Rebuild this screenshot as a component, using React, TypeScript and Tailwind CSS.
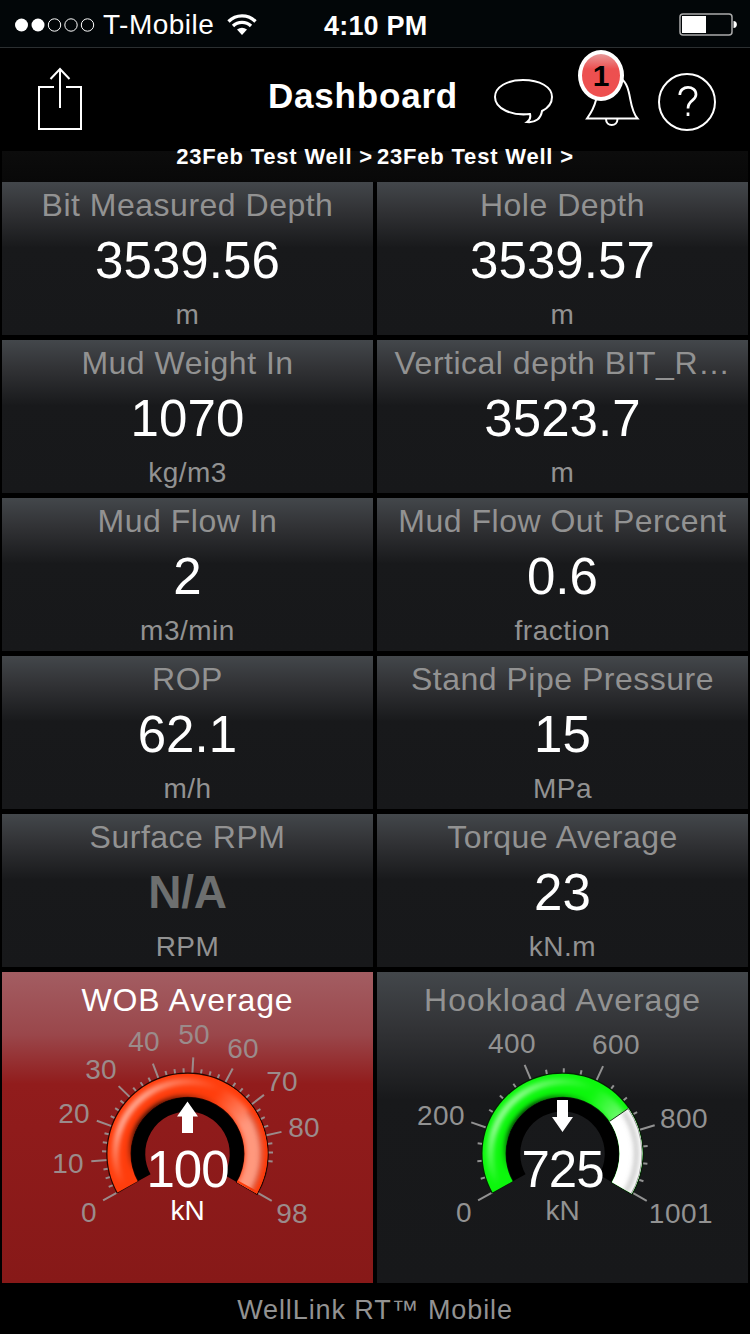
import React from "react";

const readings = [
  { label: "Bit Measured Depth", value: "3539.56", unit: "m" },
  { label: "Hole Depth", value: "3539.57", unit: "m" },
  { label: "Mud Weight In", value: "1070", unit: "kg/m3" },
  { label: "Vertical depth BIT_R…", value: "3523.7", unit: "m" },
  { label: "Mud Flow In", value: "2", unit: "m3/min" },
  { label: "Mud Flow Out Percent", value: "0.6", unit: "fraction" },
  { label: "ROP", value: "62.1", unit: "m/h" },
  { label: "Stand Pipe Pressure", value: "15", unit: "MPa" },
  { label: "Surface RPM", value: "N/A", unit: "RPM" },
  { label: "Torque Average", value: "23", unit: "kN.m" },
];

const CX = 185.5;
const CY = 181.7;
const START = 209;
const END = -30;

function polar(r: number, deg: number): [number, number] {
  const a = (deg * Math.PI) / 180;
  return [CX + r * Math.cos(a), CY - r * Math.sin(a)];
}

function arc(r: number, from: number, to: number) {
  const [x1, y1] = polar(r, from);
  const [x2, y2] = polar(r, to);
  const large = from - to > 180 ? 1 : 0;
  return `M${x1.toFixed(2)} ${y1.toFixed(2)}A${r} ${r} 0 ${large} 1 ${x2.toFixed(2)} ${y2.toFixed(2)}`;
}

const clamp = (v: number) => Math.max(0, Math.min(1, v));

// Strength of the left-hand gloss: strongest around 150 degrees, gone at the foot and past the top.
const gloss = (a: number) => clamp(Math.min((207 - a) / 45, (a - 65) / 65));
// Strength of the broad sheen that covers the right-hand side.
const sheen = (a: number) => clamp((66 - a) / 38);

const segments = Array.from({ length: 80 }, (_, i) => START + 4 - i * 3.1);

type Mark = { text: string; x: number; y: number };

type GaugeProps = {
  id: string;
  label: string;
  value: string;
  unit: string;
  alarm?: boolean;
  up?: boolean;
  scale: number;
  step: number;
  minor: number;
  lastMinor: number;
  fillTo: number;
  color: string;
  marks: Mark[];
};

function Gauge({ id, label, value, unit, alarm, up, scale, step, minor, lastMinor, fillTo, color, marks }: GaugeProps) {
  const per = 240 / scale;
  const majors: number[] = [];
  const minors: number[] = [];
  for (let v = 0; v <= lastMinor; v += minor) {
    (v % step === 0 ? majors : minors).push(START - v * per);
  }
  majors.push(-29.2);
  const soft = `url(#${id}-soft)`;
  return (
    <div
      className={
        alarm
          ? "relative h-[311px] bg-[linear-gradient(180deg,#a35d62_0%,#9a474b_20%,#911c1c_36%,#8f1b1b_50%,#871918_100%)]"
          : "relative h-[311px] bg-[linear-gradient(180deg,#43474b_0%,#323336_18%,#18191b_41%,#17181a_100%)]"
      }
    >
      <svg className="absolute inset-0 h-full w-full" viewBox="0 0 371 311" aria-hidden="true">
        <defs>
          <clipPath id={`${id}-band`}>
            <path d={`${arc(80, START, END)}L${polar(57, END).join(" ")}A57 57 0 1 0 ${polar(57, START).join(" ")}Z`} />
          </clipPath>
          <filter id={`${id}-soft`} filterUnits="userSpaceOnUse" x="0" y="0" width="371" height="311">
            <feGaussianBlur stdDeviation="2.4" />
          </filter>
        </defs>
        <g stroke={alarm ? "#9b8b8b" : "#929292"} strokeWidth="2">
          {majors.map((a) => {
            const [x1, y1] = polar(80, a);
            const [x2, y2] = polar(96.5, a);
            return <line key={a} x1={x1} y1={y1} x2={x2} y2={y2} />;
          })}
          {minors.map((a) => {
            const [x1, y1] = polar(80, a);
            const [x2, y2] = polar(85.5, a);
            return <line key={a} x1={x1} y1={y1} x2={x2} y2={y2} />;
          })}
        </g>
        <path d={arc(50, START, END)} fill="none" stroke="#000" strokeWidth="15.5" />
        <path d={arc(68.7, START + 0.5, END - 0.7)} fill="none" stroke={alarm ? "#260500" : "#062006"} strokeWidth="25" />
        <g clipPath={`url(#${id}-band)`}>
          <path d={arc(68.5, START + 1, END - 1)} fill="none" stroke={color} strokeWidth="25" />
          <g fill="none" filter={soft}>
            {segments.map((a) => (
              <path key={a} d={arc(55.5, a, a - 3.1)} stroke="#000" strokeOpacity={gloss(a + 6) * 0.9} strokeWidth="6" />
            ))}
          </g>
          <g fill="none" filter={soft}>
            {segments.map((a) => (
              <path key={a} d={arc(72, a, a - 3.1)} stroke="#fff" strokeOpacity={gloss(a) * 0.62} strokeWidth="6" />
            ))}
            {segments.map((a) => (
              <path key={`s${a}`} d={arc(66, a, a - 3.1)} stroke="#fff" strokeOpacity={sheen(a) * 0.48} strokeWidth="17" />
            ))}
          </g>
          {alarm ? (
            <>
              <path d={arc(79.500, 60, END)} fill="none" stroke="#ff3d0c" strokeWidth="2" />
              <path d={`M${polar(56, END + 0.6).join(" ")}L${polar(81, END + 0.6).join(" ")}`} stroke="#ff3d0c" strokeWidth="3" />
              <path d={arc(74, 35, END)} fill="none" stroke="#6b2010" strokeOpacity="0.35" strokeWidth="2.500" filter={soft} />
            </>
          ) : (
            <>
              <path d={arc(68.500, fillTo, END - 2)} fill="none" stroke="#fff" strokeWidth="24" />
              <path d={arc(74, fillTo, END - 2)} fill="none" stroke="#888" strokeOpacity="0.6" strokeWidth="3.500" filter={soft} />
              <path d={arc(79.500, fillTo, END - 2)} fill="none" stroke="#999" strokeWidth="1" />
              <path d={`M${polar(57, fillTo).join(" ")}L${polar(80, fillTo).join(" ")}`} stroke="#183818" strokeWidth="1" />
            </>
          )}
        </g>
        {up ? (
          <path d="M185.500 129.500L196 144.500H191V161H180V144.500H175Z" fill="#fff" />
        ) : (
          <path d="M185.500 160L175 145H180V128H191V145H196Z" fill="#fff" />
        )}
      </svg>
      {marks.map((m) => (
        <span
          key={m.text}
          className={
            alarm
              ? "absolute -translate-x-1/2 -translate-y-1/2 text-[28px] leading-[28px] tracking-[0.3px] text-[#9b8b8b]"
              : "absolute -translate-x-1/2 -translate-y-1/2 text-[28px] leading-[28px] tracking-[0.5px] text-[#929292]"
          }
          style={{ left: m.x, top: m.y }}
        >
          {m.text}
        </span>
      ))}
      <div className="relative flex flex-col items-center pt-[10px]">
        <h2 className={alarm ? "text-[32px] leading-[36px] tracking-[0.9px] text-white" : "text-[32px] leading-[36px] tracking-[1px] text-[#929292]"}>
          {label}
        </h2>
        <p className="mt-[123px] text-[51px] leading-[58px] tracking-[-1px] text-white">{value}</p>
        <p className={alarm ? "-mt-[2px] text-[28px] leading-[28px] text-white" : "-mt-[2px] text-[28px] leading-[28px] text-[#929292]"}>{unit}</p>
      </div>
    </div>
  );
}

export default function App() {
  return (
    <main className="flex h-[1334px] w-[750px] flex-col overflow-hidden bg-black font-['Liberation_Sans',Arial,sans-serif] text-white">
      <header>
        <div className="flex h-12 items-center border-b border-[#2b2f31] bg-[#020608] pt-[3px]">
          <div className="flex w-[324px] items-center pl-[15px]">
            <svg className="h-4 w-20" viewBox="0 0 80 16" aria-hidden="true">
              <circle cx="6.500" cy="8" r="6.500" fill="#fff" />
              <circle cx="23" cy="8" r="6.500" fill="#fff" />
              <g fill="none" stroke="#fff" strokeWidth="1">
                <circle cx="39.500" cy="8" r="6.200" />
                <circle cx="56" cy="8" r="6.200" />
                <circle cx="72.500" cy="8" r="6.200" />
              </g>
            </svg>
            <span className="ml-2 w-[112px] whitespace-nowrap text-[28px] leading-8 tracking-[0.5px]">T-Mobile</span>
            <svg className="ml-3 h-[22px] w-[30px]" viewBox="0 0 30 22" aria-hidden="true">
              <g fill="none" stroke="#fff" strokeWidth="3.300">
                <path d="M1.500 7.500C9 0 21 0 28.500 7.500" />
                <path d="M6 12C11 7.200 19 7.200 24 12" />
              </g>
              <path d="M10 15.500Q15 12 20 15.500L15 21Z" fill="#fff" />
            </svg>
          </div>
          <time className="pt-0.5 text-[27px] font-bold leading-8 tracking-[0.2px]">4:10 PM</time>
          <svg className="ml-auto mr-3 h-6 w-[59px]" viewBox="0 0 59 24" aria-hidden="true">
            <rect x="1" y="1" width="52" height="21" rx="3" fill="none" stroke="#aaa" strokeWidth="1.500" />
            <rect x="3" y="3" width="24" height="17" fill="#fff" />
            <path d="M54.500 8C59 8 59 15 54.500 15Z" fill="#fff" />
          </svg>
        </div>
        <div className="flex h-[103px] items-start">
          <svg className="ml-[37px] mt-[19px] h-[64px] w-[46px]" viewBox="0 0 46 64" fill="none" stroke="#fff" strokeWidth="2" aria-hidden="true">
            <path d="M17 20H2V62H44V20H29M23 41V2M13.500 12L23 2L32.500 12" />
          </svg>
          <h1 className="ml-[185px] mt-[28px] w-[191px] whitespace-nowrap text-[35px] font-bold leading-10 tracking-[0.8px]">Dashboard</h1>
          <svg className="ml-[34px] mt-[30px] h-[46px] w-[62px]" viewBox="0 0 62 46" fill="none" stroke="#fff" strokeWidth="2" aria-hidden="true">
            <path d="M37 36C19 38 2 31 2 19C2 9 14 2 30 2C47 2 59 9 59 19C59 25 55 30 49 33C48 40 43 45 34 44C37 42 38 40 37 36Z" />
          </svg>
          <div className="relative ml-6 h-[90px] w-[62px]">
            <svg className="absolute left-0 top-0 h-[82px] w-[62px]" viewBox="0 0 62 82" fill="none" stroke="#fff" strokeWidth="2" aria-hidden="true">
              <path d="M8 70.500H58.500C52 63 52 52 49.500 43C47 33 42 28 33 28C22 28 20 40 17 52C15 60 12 65 8 70.500ZM27 71C27 79 38.500 79 38.500 71" />
            </svg>
            <span className="absolute -left-[1px] top-[2px] flex h-[51px] w-[46px] items-center justify-center rounded-[50%] border-4 border-white bg-[linear-gradient(180deg,#e89a9a_0%,#ec5050_35%,#ee5050_100%)] text-[30px] font-bold leading-none text-black">
              1
            </span>
          </div>
          <svg className="ml-[17px] mt-[25px] h-[58px] w-[58px]" viewBox="0 0 58 58" fill="none" stroke="#fff" strokeWidth="2" aria-hidden="true">
            <circle cx="29" cy="29" r="28" />
            <path d="M21.800 22C21.800 12 38 12 38 21.500C38 28 30 27 30 35.500M30 39.500V43" strokeWidth="2.700" />
          </svg>
        </div>
        <p className="mx-0.5 flex h-[31px] items-start justify-center gap-1 whitespace-nowrap bg-[linear-gradient(180deg,#0c0c0c,#080808)] text-[22px] font-bold tracking-[0.8px]">
          <span className="-mt-[7px] leading-[26px]">23Feb Test Well &gt;</span>
          <span className="-mt-[7px] leading-[26px]">23Feb Test Well &gt;</span>
        </p>
      </header>
      <section className="grid grid-cols-2 gap-x-1 gap-y-[5px] px-0.5">
        {readings.map((r) => (
          <article
            key={r.label}
            className="flex h-[153px] flex-col items-center whitespace-nowrap bg-[linear-gradient(180deg,#43474b_0%,#323336_18%,#18191b_43%,#17181a_100%)] pt-[5px]"
          >
            <h2 className="text-[32px] leading-[36px] tracking-[0.5px] text-[#929292]">{r.label}</h2>
            {r.value === "N/A" ? (
              <p className="mt-[8px] text-[46px] font-bold leading-[58px] tracking-[-0.3px] text-[#6d6f6f]">{r.value}</p>
            ) : (
              <p className="mt-[9px] text-[51px] leading-[57px] tracking-[0.1px] text-white">{r.value}</p>
            )}
            <p className="mt-[12px] text-[28px] leading-[28px] tracking-[0.5px] text-[#929292]">{r.unit}</p>
          </article>
        ))}
        <Gauge
          id="wob"
          label="WOB Average"
          value="100"
          unit="kN"
          alarm
          up
          scale={98}
          step={10}
          minor={2.5}
          lastMinor={87.5}
          fillTo={-30}
          color="#ff3d0c"
          marks={[
            { text: "0", x: 87, y: 241 },
            { text: "10", x: 66, y: 192 },
            { text: "20", x: 72, y: 142 },
            { text: "30", x: 99, y: 98 },
            { text: "40", x: 142, y: 70 },
            { text: "50", x: 192, y: 63 },
            { text: "60", x: 241, y: 77 },
            { text: "70", x: 280, y: 110 },
            { text: "80", x: 302, y: 156 },
            { text: "98", x: 290, y: 242 },
          ]}
        />
        <Gauge
          id="hook"
          label="Hookload Average"
          value="725"
          unit="kN"
          scale={1001}
          step={200}
          minor={50}
          lastMinor={950}
          fillTo={34.5}
          color="#0cf70c"
          marks={[
            { text: "0", x: 87, y: 241 },
            { text: "200", x: 64, y: 144 },
            { text: "400", x: 135, y: 72 },
            { text: "600", x: 239, y: 73 },
            { text: "800", x: 307, y: 147 },
            { text: "1001", x: 304, y: 242 },
          ]}
        />
      </section>
      <footer className="flex flex-1 items-center justify-center pt-[4px] text-[27px] tracking-[0.9px] text-[#929292]">WellLink RT™ Mobile</footer>
    </main>
  );
}
